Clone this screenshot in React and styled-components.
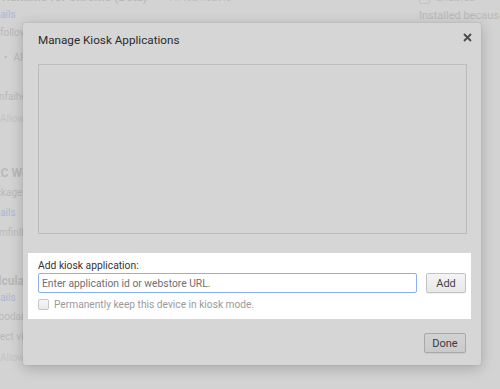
import styled, { createGlobalStyle } from "styled-components";

const GlobalStyle = createGlobalStyle`
    html, body {
        margin: 0;
        padding: 0;
        background: #d3d3d3;
        font-family: Roboto, "Liberation Sans", sans-serif;
    }
`;

const Screen = styled.div`
    position: relative;
    width: 500px;
    height: 389px;
    overflow: hidden;
    background: #d3d3d3;
`;

// faded extensions page behind the dialog
const BackPage = styled.div`
    display: flex;
    flex-direction: row;
    font-size: 10px;
    line-height: 18px;
`;

const LeftCol = styled.div`
    display: flex;
    flex-direction: column;
    flex: 1;
    min-width: 0;
`;

const RightCol = styled.div`
    display: flex;
    flex-direction: column;
    width: 81px;
    margin-top: -11px;
    color: #bcbcbc;
`;

const BackRow = styled.div`
    white-space: nowrap;
    margin-top: ${(p) => p.$gap}px;
    margin-left: ${(p) => p.$shift || 0}px;
    color: ${(p) =>
        p.$kind === "link" ? "#a9b7d4" : p.$kind === "soft" ? "#c4c4c4" : "#b9b9b9"};
    font-weight: ${(p) => (p.$kind === "bold" ? 700 : 400)};
    font-size: ${(p) => (p.$kind === "bold" ? "12px" : p.$size || "10px")};
`;

const Version = styled.span`
    font-weight: 400;
    font-size: 10px;
    margin-left: 20px;
    color: #bdbdbd;
`;

const Bullet = styled.span`
    margin: 0 6px 0 4px;
`;

const EnabledLine = styled.div`
    display: flex;
    align-items: center;
    gap: 6px;
    font-size: 11px;
`;

const FadedBox = styled.span`
    width: 9px;
    height: 9px;
    border: 1px solid #c2c2c2;
    border-radius: 2px;
`;

const Dialog = styled.div`
    position: absolute;
    left: 23px;
    top: 23px;
    width: 458px;
    height: 342px;
    box-sizing: border-box;
    display: flex;
    flex-direction: column;
    background: #d6d6d6;
    border-radius: 2px;
    box-shadow: 0 3px 14px rgba(0, 0, 0, 0.22), 0 0 1px rgba(0, 0, 0, 0.3);
`;

const Header = styled.div`
    display: flex;
    flex-direction: row;
    justify-content: space-between;
    align-items: flex-start;
    height: 41px;
    padding: 0 9px 0 15px;
`;

const Title = styled.span`
    margin-top: 9px;
    font-size: 11.7px;
    line-height: 17px;
    color: #2b2b2b;
`;

const CloseIcon = styled.svg`
    margin-top: 10px;
    width: 9px;
    height: 9px;
`;

const AppList = styled.div`
    height: 170px;
    margin: 0 14px 0 15px;
    box-sizing: border-box;
    border: 1px solid #bcbcbc;
    background: #d5d5d5;
`;

const Spotlight = styled.div`
    display: flex;
    flex-direction: column;
    margin: 19px 10px 0 5px;
    height: 66px;
    box-sizing: border-box;
    padding: 6px 5px 0 10px;
    background: #ffffff;
`;

const FieldLabel = styled.label`
    font-size: 10.3px;
    line-height: 14px;
    color: #333;
`;

const AddRow = styled.div`
    display: flex;
    flex-direction: row;
    gap: 9px;
`;

const UrlInput = styled.input`
    flex: 1;
    height: 20px;
    box-sizing: border-box;
    border: 1px solid #8bb0ec;
    border-radius: 2px;
    padding: 0 3px;
    font-family: Roboto, "Liberation Sans", sans-serif;
    font-size: 10.3px;
    outline: none;
    &::placeholder {
        color: #6f6f6f;
    }
`;

const Button = styled.button`
    width: ${(p) => p.$width}px;
    height: 20px;
    box-sizing: border-box;
    padding: 0;
    font-family: Roboto, "Liberation Sans", sans-serif;
    font-size: 11px;
    color: ${(p) => (p.$dim ? "#3a3a3a" : "#444")};
    border: 1px solid ${(p) => (p.$dim ? "#a9a9a9" : "#c2c2c2")};
    border-radius: 2px;
    background: ${(p) =>
        p.$dim
            ? "linear-gradient(#d2d2d2, #cacaca)"
            : "linear-gradient(#f4f4f4, #e8e8e8)"};
    box-shadow: 0 1px 0 rgba(0, 0, 0, 0.06);
`;

const KeepRow = styled.label`
    display: flex;
    flex-direction: row;
    align-items: center;
    gap: 5px;
    margin-top: 6px;
    font-size: 10.2px;
    color: #9a9a9a;
`;

const Check = styled.span`
    width: 11px;
    height: 11px;
    box-sizing: border-box;
    border: 1px solid #c6c6c6;
    border-radius: 2px;
    background: linear-gradient(#f6f6f6, #e9e9e9);
`;

const Footer = styled.div`
    display: flex;
    justify-content: flex-end;
    padding: 14px 15px 0 0;
`;

const backRows = [
    { gap: -12, kind: "bold", shift: 2, text: "Runtime for Chrome (Beta)", version: "41.4021.029.0" },
    { gap: -1, kind: "link", shift: -15, text: "Details" },
    { gap: 0, kind: "text", shift: 0, text: "following permissions:" },
    { gap: 7, kind: "text", shift: 0, text: "API access", bullet: true },
    { gap: 21, kind: "text", shift: -1, text: "nfaihejdmmgpkhpoakpnbhmaldnkjaf" },
    { gap: 4, kind: "soft", shift: 0, text: "Allow in incognito" },
    { gap: 36, kind: "bold", shift: -15, text: "ARC Welder" },
    { gap: 2, kind: "text", shift: -16, text: "Package" },
    { gap: 2, kind: "link", shift: -15, text: "Details" },
    { gap: 2, kind: "text", shift: -1, text: "mfinlbkaiebjgnkhcjnbhjpbglgjkmfm" },
    { gap: 30, kind: "bold", shift: -16, text: "Calculator" },
    { gap: -1, kind: "link", shift: -15, text: "Details" },
    { gap: 1, kind: "text", shift: -18, text: "ID: joodangkbfjnajiiifokapkpmhfnpleo" },
    { gap: 2, kind: "text", shift: -19, text: "Inspect views" },
    { gap: 3, kind: "soft", shift: 0, text: "Allow in incognito" },
];

function App() {
    return (
        <Screen>
            <GlobalStyle />
            <BackPage>
                <LeftCol>
                    {backRows.map((row, i) => (
                        <BackRow key={i} $gap={row.gap} $shift={row.shift} $kind={row.kind}>
                            {row.bullet && <Bullet>•</Bullet>}
                            {row.text}
                            {row.version && <Version>{row.version}</Version>}
                        </BackRow>
                    ))}
                </LeftCol>
                <RightCol>
                    <EnabledLine>
                        <FadedBox />
                        Enabled
                    </EnabledLine>
                    <BackRow $gap={0} $kind="text" $size="11px">
                        Installed because
                    </BackRow>
                </RightCol>
            </BackPage>

            <Dialog>
                <Header>
                    <Title>Manage Kiosk Applications</Title>
                    <CloseIcon viewBox="0 0 9 9">
                        <path d="M1 1 L8 8 M8 1 L1 8" stroke="#4a4a4a" strokeWidth="1.8" />
                    </CloseIcon>
                </Header>
                <AppList />
                <Spotlight>
                    <FieldLabel>Add kiosk application:</FieldLabel>
                    <AddRow>
                        <UrlInput placeholder="Enter application id or webstore URL." />
                        <Button $width={40}>Add</Button>
                    </AddRow>
                    <KeepRow>
                        <Check />
                        Permanently keep this device in kiosk mode.
                    </KeepRow>
                </Spotlight>
                <Footer>
                    <Button $width={42} $dim>Done</Button>
                </Footer>
            </Dialog>
        </Screen>
    );
}

export default App;
